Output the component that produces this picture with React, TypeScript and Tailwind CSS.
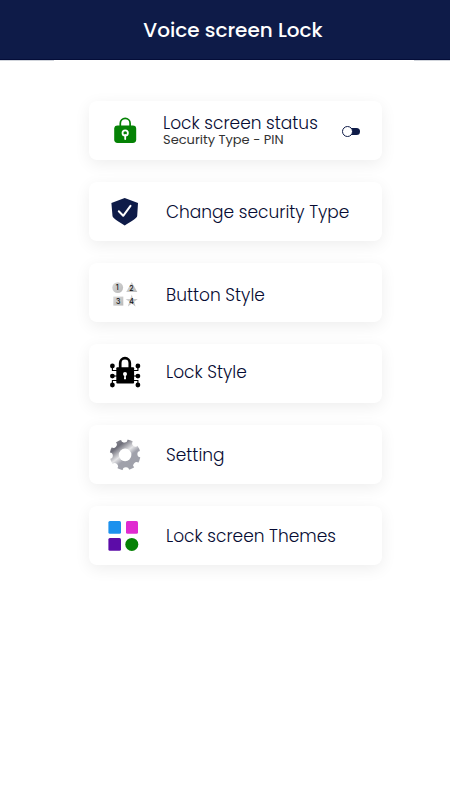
import React, { useState } from "react";

interface MenuItem {
  text: string;
  icon: React.ReactNode;
  textClass: string;
}

const LockIcon = () => (
  <svg viewBox="0 0 32 32" className="w-8 h-8" aria-hidden="true">
    <path d="M11.3 12 V8.2 a4.9 4.9 0 0 1 9.8 0 V12" fill="none" stroke="#058205" strokeWidth="1.7" />
    <rect x="5.2" y="10.4" width="22" height="17.6" rx="3.4" fill="#058205" />
    <circle cx="16.2" cy="18" r="2.7" fill="none" stroke="#fff" strokeWidth="1.8" />
    <path d="M16.2 20 V24" stroke="#fff" strokeWidth="1.8" strokeLinecap="round" />
  </svg>
);

const ShieldIcon = () => (
  <svg viewBox="0 0 32 32" className="w-8 h-8" aria-hidden="true">
    <path
      d="M15.7 2 L29 7 L28.2 20 C28 22.5 20.5 26 15.7 29.6 C10.9 26 3.7 22.5 3.5 20 L2.4 7 Z"
      fill="#0e1b48"
    />
    <path
      d="M9.8 15.3 L14.2 19.8 L21.5 9.8"
      fill="none"
      stroke="#fff"
      strokeWidth="2"
      strokeLinecap="round"
      strokeLinejoin="round"
    />
  </svg>
);

const ButtonStyleIcon = () => (
  <svg viewBox="0 0 32 32" className="w-8 h-8" aria-hidden="true">
    <defs>
      <linearGradient id="silver" x1="0" y1="0" x2="1" y2="1">
        <stop offset="0" stopColor="#d9d9d9" />
        <stop offset="1" stopColor="#b9b9b9" />
      </linearGradient>
    </defs>
    <g fill="url(#silver)">
      <circle cx="8.7" cy="10.6" r="5.4" />
      <path d="M22.7 5 L28.3 15 H17.2 Z" />
      <rect x="4.3" y="19.6" width="10" height="9" />
      <path d="M22.7 17.6 L24.2 22 H28.8 L25.1 24.8 L26.5 29.4 L22.7 26.6 L18.9 29.4 L20.3 24.8 L16.6 22 H21.2 Z" />
    </g>
    <g fontFamily="Inter, sans-serif" fontSize="7" fontWeight="500" textAnchor="middle" fill="#111">
      <text x="8.2" y="13">1</text>
      <text x="22.3" y="13.8">2</text>
      <text x="9.2" y="26.8">3</text>
      <text x="22.5" y="26.8">4</text>
    </g>
  </svg>
);

const LockStyleIcon = () => (
  <svg viewBox="0 0 32 32" className="w-8 h-8 overflow-visible" aria-hidden="true">
    <path d="M11.2 11 V5 a4.8 4.8 0 0 1 9.6 0 V11" fill="none" stroke="#000" strokeWidth="2.7" />
    <rect x="7.3" y="9.2" width="17.8" height="16.2" rx="1" fill="#000" />
    <g fill="none" stroke="#000" strokeWidth="1.1">
      <path d="M3.4 8 V12.5 H8 M3.4 18 H8 M3.4 27 V22.5 H8" />
      <path d="M28.9 8 V12.5 H24 M28.9 18 H24 M28.9 27 V22.5 H24" />
    </g>
    <g fill="#000">
      <circle cx="3.4" cy="8" r="2.4" />
      <circle cx="3.4" cy="18.1" r="2.4" />
      <circle cx="3.4" cy="27" r="2.4" />
      <circle cx="28.9" cy="8" r="2.4" />
      <circle cx="28.9" cy="18.1" r="2.4" />
      <circle cx="28.9" cy="27" r="2.4" />
    </g>
    <circle cx="16" cy="15.9" r="2" fill="#fff" />
    <path d="M15.4 16 H16.7 L17 21.2 H15 Z" fill="#fff" />
  </svg>
);

const GearIcon = () => (
  <svg viewBox="0 0 32 32" className="w-8 h-8" aria-hidden="true">
    <defs>
      <linearGradient id="steel" x1="0.15" y1="0.05" x2="0.85" y2="0.95">
        <stop offset="0" stopColor="#8a8a93" />
        <stop offset="0.2" stopColor="#6f6f7a" />
        <stop offset="0.45" stopColor="#e6e6e8" />
        <stop offset="0.6" stopColor="#a0a1ab" />
        <stop offset="1" stopColor="#9fa1aa" />
      </linearGradient>
      <mask id="teeth">
        <circle cx="16.1" cy="15.9" r="15.3" fill="#fff" />
        <circle cx="16.1" cy="15.9" r="6.3" fill="#000" />
        {[-3, 42, 87, 132, 177, 222, 267, 312].map((angle) => (
          <ellipse
            key={angle}
            cx="16.1"
            cy="0.4"
            rx="3.2"
            ry="3.2"
            fill="#000"
            transform={`rotate(${angle} 16.1 15.9)`}
          />
        ))}
      </mask>
    </defs>
    <rect width="32" height="32" fill="url(#steel)" mask="url(#teeth)" />
  </svg>
);

const ThemesIcon = () => (
  <svg viewBox="0 0 32 32" className="w-8 h-8 overflow-visible" aria-hidden="true">
    <rect x="-0.6" y="1" width="12.6" height="12.8" rx="1.5" fill="#1c91ed" />
    <rect x="17" y="1" width="12" height="12.8" rx="1.5" fill="#e02bd0" />
    <rect x="-0.6" y="18" width="12.6" height="12.8" rx="1.5" fill="#5c0ca8" />
    <circle cx="22.8" cy="24.4" r="6.5" fill="#058205" />
  </svg>
);

const menuItems: MenuItem[] = [
  { text: "Change security Type", icon: <ShieldIcon />, textClass: "" },
  { text: "Button Style", icon: <ButtonStyleIcon />, textClass: "pt-1" },
  { text: "Lock Style", icon: <LockStyleIcon />, textClass: "pb-1" },
  { text: "Setting", icon: <GearIcon />, textClass: "" },
  { text: "Lock screen Themes", icon: <ThemesIcon />, textClass: "" },
];

const App: React.FC = () => {
  const [enabled, setEnabled] = useState<boolean>(false);

  return (
    <div className="min-h-screen bg-white font-['Poppins',Inter,sans-serif] text-[#060b33]">
      <header className="bg-[#0e1b48] border-b border-[#040d38] h-[60px] flex items-center justify-center pl-4">
        <h1 className="text-white text-xl font-medium">Voice screen Lock</h1>
      </header>
      <div className="flex justify-between" aria-hidden="true">
        <div className="w-[12%] h-px bg-gray-300" />
        <div className="w-[8%] h-px bg-gray-300" />
      </div>

      <main className="flex flex-col gap-[22px] pt-10 pb-10 pl-[89px] pr-[68px]">
        <section className="flex items-center h-[59px] pl-5 pr-[22px] rounded-lg bg-white shadow-[0_4px_16px_rgba(0,0,0,0.07)]">
          <LockIcon />
          <div className="ml-[22px] flex-1 whitespace-nowrap">
            <label htmlFor="lock-status" className="block text-[17px] leading-[18px] font-light">
              Lock screen status
            </label>
            <p className="text-[13px] leading-4 font-normal text-[#333]">Security Type - PIN</p>
          </div>
          <input
            id="lock-status"
            type="checkbox"
            role="switch"
            checked={enabled}
            onChange={() => setEnabled(!enabled)}
            className="relative appearance-none w-4 h-[7px] mt-0.5 rounded-full bg-[#0e1b48] cursor-pointer before:absolute before:-left-0.5 before:-top-0.5 before:w-[11px] before:h-[11px] before:rounded-full before:border before:border-[#0e1b48] before:bg-white checked:before:left-2"
          />
        </section>

        {menuItems.map((item) => (
          <button
            key={item.text}
            type="button"
            className="flex items-center h-[59px] pl-5 pr-4 rounded-lg bg-white text-left cursor-pointer shadow-[0_4px_16px_rgba(0,0,0,0.07)]"
          >
            {item.icon}
            <span className={`ml-[25px] text-[17px] leading-6 font-light whitespace-nowrap ${item.textClass}`}>
              {item.text}
            </span>
          </button>
        ))}
      </main>
    </div>
  );
};

export default App;
